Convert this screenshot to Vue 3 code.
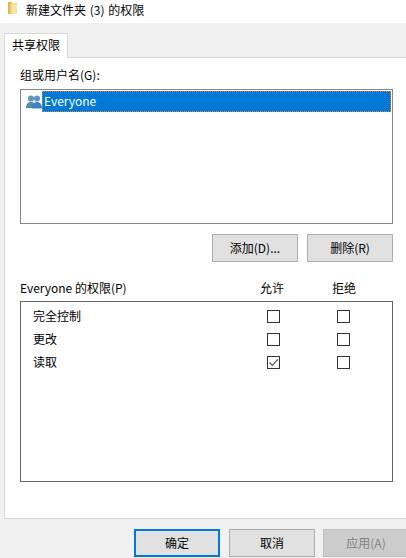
<script setup>
const perms = [
  { name: '完全控制', allow: false },
  { name: '更改', allow: false },
  { name: '读取', allow: true }
]
</script>

<template>
  <div class="dialog">
    <div class="titlebar">
      <svg class="folder" width="16" height="16" viewBox="0 0 16 16">
        <path d="M2 2h3l1 1v11H2z" fill="#e3b64f" />
        <path d="M4 3.500l7-.5v11H4z" fill="#f3d27a" />
        <path d="M6 4.500l5-.5v10H6z" fill="#f8e2a2" />
      </svg>
      <span>新建文件夹 (3) 的权限</span>
    </div>
    <div class="tabs">
      <div class="tab">共享权限</div>
    </div>
    <div class="panel">
      <div class="label first">组或用户名(G):</div>
      <div class="listbox">
        <div class="row">
          <svg class="users" width="16" height="16" viewBox="0 0 16 16">
            <circle cx="5" cy="4.500" r="3" fill="#5f9bab" />
            <path d="M0 14c0-4 2-6 5-6s5 2 5 6z" fill="#4f8f9f" />
            <circle cx="11" cy="4.500" r="3" fill="#5b8fd4" />
            <path d="M6 14.500c0-4 2-6.500 5-6.500s5 2.500 5 6.500z" fill="#3f7fd0" />
          </svg>
          <span class="selected">Everyone</span>
        </div>
      </div>
      <div class="actions">
        <button class="btn">添加(D)...</button>
        <button class="btn">删除(R)</button>
      </div>
      <div class="perm-head">
        <span class="perm-title">Everyone 的权限(P)</span>
        <span class="col">允许</span>
        <span class="col">拒绝</span>
      </div>
      <div class="permbox">
        <div v-for="p in perms" :key="p.name" class="perm-row">
          <span class="perm-name">{{ p.name }}</span>
          <span class="cell">
            <span class="check">
              <svg v-if="p.allow" width="11" height="11" viewBox="0 0 11 11">
                <path d="M1.500 5.500l2.800 2.800 5.500-6" fill="none" stroke="#555" stroke-width="1.200" />
              </svg>
            </span>
          </span>
          <span class="cell"><span class="check"></span></span>
        </div>
      </div>
    </div>
    <div class="footer">
      <button class="btn primary">确定</button>
      <button class="btn">取消</button>
      <button class="btn disabled">应用(A)</button>
    </div>
  </div>
</template>

<style scoped>
.dialog {
  width: 406px;
  height: 558px;
  overflow: hidden;
  display: flex;
  flex-direction: column;
  background: #f0f0f0;
  color: #000;
  font-family: "Noto Sans CJK SC", "Noto Sans", sans-serif;
  font-size: 12px;
}
.titlebar {
  height: 23px;
  flex: none;
  background: #fff;
  display: flex;
  align-items: flex-start;
  gap: 4px;
  padding-left: 6px;
  font-size: 12px;
  word-spacing: 1px;
  line-height: 19px;
  box-sizing: border-box;
}
.folder {
  flex: none;
}
.tabs {
  flex: none;
  height: 34px;
  padding: 10px 0 0 4px;
  box-sizing: border-box;
  display: flex;
}
.tab {
  width: 64px;
  height: 25px;
  box-sizing: border-box;
  background: #fff;
  border: 1px solid #d9d9d9;
  border-bottom: none;
  line-height: 22px;
  text-align: center;
  position: relative;
  z-index: 1;
}
.panel {
  height: 462px;
  flex: none;
  margin-left: 4px;
  width: 410px;
  box-sizing: border-box;
  background: #fff;
  border: 1px solid #d9d9d9;
  padding: 8px 0 0 15px;
  display: flex;
  flex-direction: column;
}
.label {
  line-height: 18px;
}
.first {
  height: 23px;
}
.listbox {
  width: 373px;
  height: 135px;
  box-sizing: border-box;
  border: 1px solid #82878f;
  padding: 1px;
}
.row {
  display: flex;
  align-items: center;
  height: 21px;
  padding-left: 4px;
}
.users {
  flex: none;
}
.selected {
  flex: 1;
  height: 21px;
  line-height: 20px;
  padding-left: 2px;
  box-sizing: border-box;
  background: #0078d7;
  color: #fff;
  outline: 1px dotted #d9822b;
  outline-offset: -1px;
}
.actions {
  display: flex;
  justify-content: flex-end;
  gap: 9px;
  width: 373px;
  margin-top: 10px;
}
.btn {
  width: 86px;
  height: 28px;
  flex: none;
  padding: 0 0 2px;
  box-sizing: border-box;
  border: 1px solid #adadad;
  background: #e1e1e1;
  color: #000;
  font: inherit;
}
.perm-head {
  display: flex;
  align-items: center;
  width: 373px;
  height: 18px;
  padding-bottom: 2px;
  box-sizing: border-box;
  margin-top: 17px;
}
.perm-title {
  flex: 1;
}
.col {
  width: 72px;
  flex: none;
  text-align: center;
}
.col:last-child {
  margin-right: 13px;
}
.permbox {
  width: 373px;
  height: 181px;
  margin-top: 4px;
  box-sizing: border-box;
  border: 1px solid #646464;
  padding-top: 3px;
}
.perm-row {
  display: flex;
  align-items: center;
  height: 23px;
  margin-right: -1px;
}
.perm-name {
  flex: 1;
  padding: 0 0 2px 12px;
}
.cell {
  width: 70px;
  flex: none;
  padding-left: 28px;
  box-sizing: border-box;
  display: flex;
}
.cell:last-child {
  margin-right: 14px;
}
.check {
  width: 13px;
  height: 13px;
  box-sizing: border-box;
  border: 1px solid #333;
  background: #fff;
  display: flex;
  align-items: center;
  justify-content: center;
}
.footer {
  flex: 1;
  display: flex;
  gap: 9px;
  padding: 10px 0 0 134px;
}
.primary {
  border: 2px solid #0078d7;
}
.disabled {
  background: #ccc;
  border-color: #bfbfbf;
  color: #838383;
  margin-left: -1px;
}
</style>
